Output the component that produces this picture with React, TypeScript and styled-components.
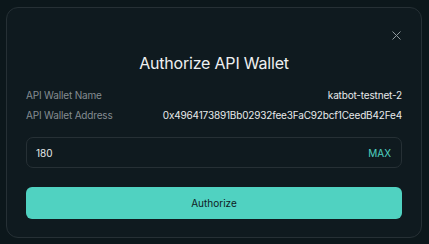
import styled, { createGlobalStyle } from 'styled-components'

const GlobalStyle = createGlobalStyle`
  html, body {
    margin: 0;
    padding: 0;
    background: #0c171b;
    font-family: Inter, "Noto Sans", sans-serif;
  }
`

const rows = [
  { label: 'API Wallet Name', value: 'katbot-testnet-2' },
  { label: 'API Wallet Address', value: '0x4964173891Bb02932fee3FaC92bcf1CeedB42Fe4' },
]

export default function App() {
  return (
    <>
      <GlobalStyle />
      <Page>
        <Modal>
          <Header>
            <CloseButton aria-label="Close">
              <svg width="9" height="9" viewBox="0 0 9 9">
                <path d="M0.5 0.5L8.5 8.5M8.5 0.5L0.5 8.5" stroke="#8f989d" strokeWidth="1" />
              </svg>
            </CloseButton>
          </Header>
          <Title>Authorize API Wallet</Title>
          <InfoList>
            {rows.map(({ label, value }) => (
              <InfoRow key={label}>
                <Label>{label}</Label>
                <Value>{value}</Value>
              </InfoRow>
            ))}
          </InfoList>
          <InputWrap>
            <Input defaultValue="180" />
            <MaxButton>MAX</MaxButton>
          </InputWrap>
          <SubmitButton>Authorize</SubmitButton>
        </Modal>
      </Page>
    </>
  )
}

const Page = styled.div`
  width: 429px;
  height: 244px;
  padding: 7px 7px 0 6px;
  box-sizing: border-box;
`

const Modal = styled.div`
  box-sizing: border-box;
  width: 416px;
  height: 231px;
  background: #0f1a1f;
  border: 1px solid #263035;
  border-radius: 12px;
  padding: 19px 19px 18px;
  display: flex;
  flex-direction: column;
`

const Header = styled.div`
  display: flex;
  justify-content: flex-end;
  height: 16px;
`

const CloseButton = styled.button`
  background: none;
  border: none;
  padding: 0;
  width: 16px;
  height: 16px;
  display: flex;
  align-items: center;
  justify-content: center;
  margin-right: -2px;
  cursor: pointer;
`

const Title = styled.h2`
  margin: 10px 0 0;
  text-align: center;
  color: #eef0f1;
  font-size: 16px;
  line-height: 20px;
  font-weight: 400;
  letter-spacing: -0.2px;
`

const InfoList = styled.div`
  margin-top: 15px;
  display: flex;
  flex-direction: column;
  gap: 6px;
`

const InfoRow = styled.div`
  display: flex;
  justify-content: space-between;
  font-size: 10px;
  line-height: 14px;
  letter-spacing: -0.17px;
`

const Label = styled.span`
  color: #848c91;
`

const Value = styled.span`
  color: #e8eaeb;
`

const InputWrap = styled.div`
  margin-top: 15px;
  height: 31px;
  box-sizing: border-box;
  border: 1px solid #263035;
  border-radius: 7px;
  display: flex;
  align-items: center;
  padding: 0 10px 0 9px;
`

const Input = styled.input`
  flex: 1;
  background: none;
  border: none;
  outline: none;
  color: #e8eaeb;
  font-family: inherit;
  font-size: 10px;
  padding: 0;
`

const MaxButton = styled.button`
  background: none;
  border: none;
  padding: 0;
  color: #50d2c1;
  font-family: inherit;
  font-size: 10px;
  cursor: pointer;
`

const SubmitButton = styled.button`
  margin-top: 19px;
  height: 32px;
  border: none;
  border-radius: 6px;
  background: #50d2c1;
  color: #0f1a1f;
  font-family: inherit;
  font-size: 10px;
  cursor: pointer;
`
